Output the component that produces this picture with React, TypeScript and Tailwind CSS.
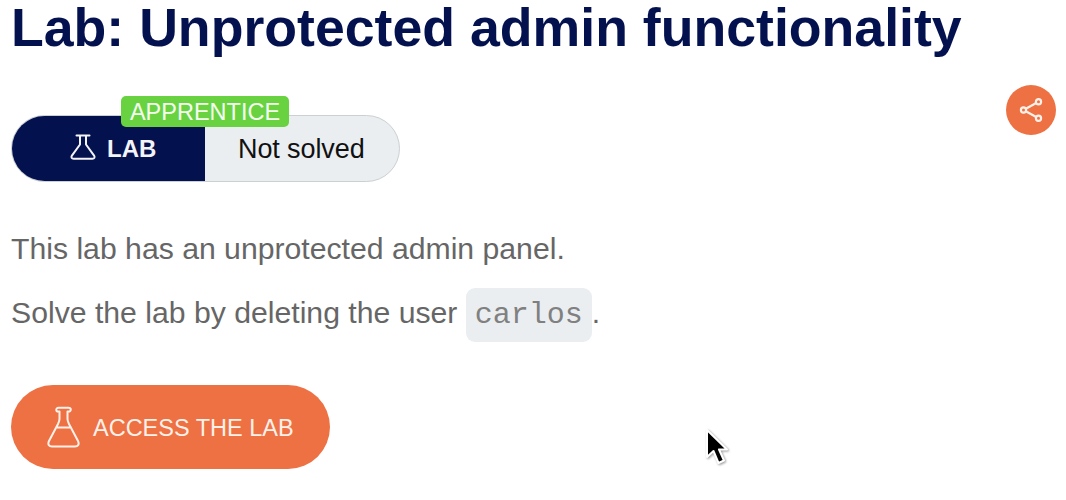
import React from "react";

function LabFlask() {
  return (
    <svg className="mr-[11px] mb-[4px] h-[28px] w-[26px] shrink-0" viewBox="0 0 26 28" fill="none" stroke="currentColor" strokeWidth="2" strokeLinecap="round" strokeLinejoin="round">
      <path d="M6.500 2.500h13M10 3v8.500L1.900 22.600c-1 1.800-.3 3.200 1.700 3.200h18.800c2 0 2.700-1.400 1.700-3.200L16 11.500V3" />
    </svg>
  );
}

function AccessFlask() {
  return (
    <svg className="mr-[12px] h-[42px] w-[34px] shrink-0" viewBox="0 0 34 42" fill="none" stroke="currentColor" strokeWidth="2" strokeLinecap="round" strokeLinejoin="round">
      <path d="M11.500 5.500c-3 0-3-3.700 0-3.700h10c3 0 3 3.700 0 3.700M12.500 5.500v7.500c0 2-.5 3-1.500 5L2 35c-1.500 3.200-.2 5.600 3 5.600h23c3.200 0 4.500-2.400 3-5.600l-9-17c-1-2-1.500-3-1.500-5V5.500M9.500 21.500h14.500" />
    </svg>
  );
}

export default function App() {
  return (
    <main className="relative flex h-[500px] w-[1066px] flex-col items-start overflow-hidden bg-white pl-[11px] font-['Liberation_Sans',Arial,sans-serif]">
      <h1 className="h-[60px] whitespace-nowrap text-[53.65px] font-bold leading-[54px] text-[#04114f]">Lab: Unprotected admin functionality</h1>
      <div className="flex w-[1045px] items-start justify-between pt-[25px]">
        <div className="relative mt-[30px] flex h-[67px] w-[389px] rounded-full border border-[#cbd0d2] bg-[#eaeef1]">
          <div className="flex w-[193px] items-center rounded-l-full bg-[#04114f] pl-[58px] text-[24px] font-bold text-[#f3f4f8]">
            <LabFlask /><span>LAB</span>
          </div>
          <div className="flex items-center pl-[33px] pt-[2px] text-[27px] tracking-[-0.1px] text-[#111]">Not solved</div>
          <div className="absolute left-[109px] top-[-20px] flex h-[31px] w-[168px] items-center justify-center rounded-[5px] bg-[#69d240] pt-[2px] text-[23.500px] text-[#f4fff0]">APPRENTICE</div>
        </div>
        <button aria-label="Share" className="flex h-[50px] w-[50px] items-center justify-center rounded-full bg-[#ed7143] text-[#fff0e9]">
          <svg className="h-[26px] w-[26px]" viewBox="0 0 26 26" fill="none" stroke="currentColor" strokeWidth="2.200"><circle cx="5.500" cy="13" r="2.600" /><circle cx="20.500" cy="4.700" r="2.600" /><circle cx="20.500" cy="21.300" r="2.600" /><path d="m7.800 11.700 10.400-5.700M7.800 14.300l10.400 5.700" /></svg>
        </button>
      </div>
      <p className="mt-[48px] h-[38px] text-[30.2px] leading-[38px] text-[#666]">This lab has an unprotected admin panel.</p>
      <p className="mt-[20px] flex h-[54px] items-center whitespace-pre text-[30.2px] text-[#666]"><span className="-mt-[5px]">Solve the lab by deleting the user </span><code className="flex h-[54px] w-[126px] items-center justify-center rounded-[9px] bg-[#eaeef1] font-['Liberation_Mono','Courier_New',monospace] text-[30px] text-[#808080]">carlos</code><span className="-mt-[5px]">.</span></p>
      <button className="mt-[43px] flex h-[84px] w-[319px] items-center rounded-full bg-[#ed7143] pl-[36px] text-[23.500px] text-[#fff0e9]"><AccessFlask /><span className="pt-[3px]">ACCESS THE LAB</span></button>
      <svg className="absolute left-[704px] top-[427px] h-[41px] w-[26px] drop-shadow-[1px_1px_1px_rgba(0,0,0,0.4)]" viewBox="0 0 26 41"><path d="M3 3v27l6.500-6 5 12 5.500-2.500-5-11h8Z" fill="black" stroke="white" strokeWidth="2" strokeLinejoin="round" /></svg>
    </main>
  );
}
